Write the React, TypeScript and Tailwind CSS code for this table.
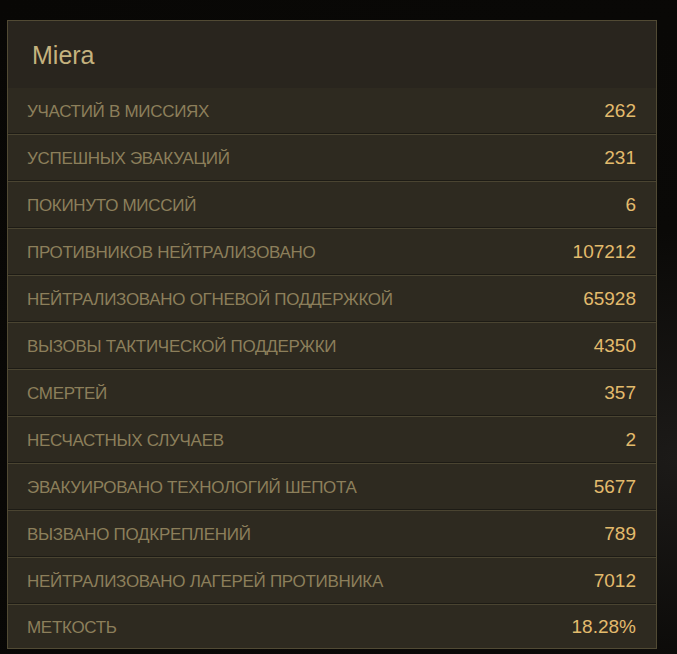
const stats: [string, string][] = [
  ["УЧАСТИЙ В МИССИЯХ", "262"],
  ["УСПЕШНЫХ ЭВАКУАЦИЙ", "231"],
  ["ПОКИНУТО МИССИЙ", "6"],
  ["ПРОТИВНИКОВ НЕЙТРАЛИЗОВАНО", "107212"],
  ["НЕЙТРАЛИЗОВАНО ОГНЕВОЙ ПОДДЕРЖКОЙ", "65928"],
  ["ВЫЗОВЫ ТАКТИЧЕСКОЙ ПОДДЕРЖКИ", "4350"],
  ["СМЕРТЕЙ", "357"],
  ["НЕСЧАСТНЫХ СЛУЧАЕВ", "2"],
  ["ЭВАКУИРОВАНО ТЕХНОЛОГИЙ ШЕПОТА", "5677"],
  ["ВЫЗВАНО ПОДКРЕПЛЕНИЙ", "789"],
  ["НЕЙТРАЛИЗОВАНО ЛАГЕРЕЙ ПРОТИВНИКА", "7012"],
  ["МЕТКОСТЬ", "18.28%"],
];

export default function App() {
  return (
    <div className="w-[677px] h-[654px] overflow-hidden bg-[#090806] bg-[radial-gradient(ellipse_at_100%_70%,#1c1a18_0%,#0a0907_35%,#080705_100%)] pt-5 pl-[7px] font-['Liberation_Sans',Arial,sans-serif]">
      <div className="w-[650px] border border-[#514a34] bg-[#2e2a20]">
        <div className="h-[67px] bg-[#29251e] flex items-center pl-[24px] pt-[2px]">
          <h2 className="text-[25px] text-[#c4b27e] leading-none">Miera</h2>
        </div>
        {stats.map(([label, value], i) => (
          <div
            key={label}
            className={
              i === 0
                ? "h-[46px] flex items-center justify-between pl-[19px] pr-[20px] pt-[2px] border-b border-[#1d1b15]"
                : i === stats.length - 1
                ? "h-[44px] flex items-center justify-between pl-[19px] pr-[20px] pt-[2px] border-t border-[#4a4431]"
                : "h-[47px] flex items-center justify-between pl-[19px] pr-[20px] pt-[2px] border-t border-b border-t-[#4a4431] border-b-[#1d1b15]"
            }
          >
            <span className="text-[17px] text-[#8c7f5b] tracking-[-0.3px]">{label}</span>
            <span className="text-[19px] text-[#e3bb6d]">{value}</span>
          </div>
        ))}
      </div>
    </div>
  );
}
